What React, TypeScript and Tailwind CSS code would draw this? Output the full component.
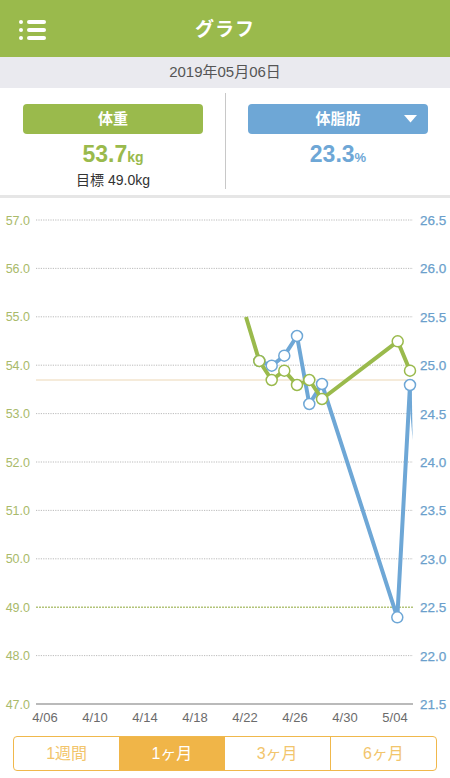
const font = "font-['Liberation_Sans','Noto_Sans_CJK_JP',sans-serif]";

const leftTicks = ["57.0", "56.0", "55.0", "54.0", "53.0", "52.0", "51.0", "50.0", "49.0", "48.0", "47.0"];
const rightTicks = ["26.5", "26.0", "25.5", "25.0", "24.5", "24.0", "23.5", "23.0", "22.5", "22.0", "21.5"];
const days = ["4/06", "4/10", "4/14", "4/18", "4/22", "4/26", "4/30", "5/04"];

const rowY = (i: number) => 220 + i * 48.4;

const weight: [number, number][] = [
  [259.3, 361],
  [271.7, 380],
  [284.3, 370.7],
  [297, 385],
  [309.3, 380],
  [322, 399],
  [397.7, 341.3],
  [410, 370.7],
];

const fat: [number, number][] = [
  [259.3, 361],
  [271.7, 365.7],
  [284.3, 355.7],
  [297, 336],
  [309.3, 404],
  [322, 384],
  [397.3, 617.3],
  [410, 385],
];

const pts = (list: [number, number][]) => list.map(([x, y]) => `${x},${y}`).join(" ");

function Chart() {
  return (
    <svg viewBox="0 198 450 533" width="450" height="533" className="block">
      {leftTicks.map((t, i) =>
        i === 8 || i === 10 ? null : (
          <line key={t} x1="36" x2="413" y1={rowY(i)} y2={rowY(i)} stroke="#a9a9a9" strokeWidth="0.8" strokeDasharray="1.2 1.2" />
        )
      )}
      <line x1="36" x2="413" y1={rowY(8)} y2={rowY(8)} stroke="#b3c47a" strokeWidth="1.6" strokeDasharray="2 1" />
      <line x1="36" x2="413" y1={rowY(10)} y2={rowY(10)} stroke="#a3a3a3" strokeWidth="1.5" />
      <line x1="36" x2="413" y1="380" y2="380" stroke="#ecd7b5" strokeWidth="1" />

      {leftTicks.map((t, i) => (
        <text key={t} x="30" y={rowY(i) + 4.5} textAnchor="end" fontSize="12.5" fill="#a9ba6a" fontFamily="Liberation Sans, sans-serif">
          {t}
        </text>
      ))}
      {rightTicks.map((t, i) => (
        <text key={t} x="420" y={rowY(i) + 5} fontSize="13.5" fill="#6b9fcc" fontFamily="Liberation Sans, sans-serif" stroke="#6b9fcc" strokeWidth="0.25">
          {t}
        </text>
      ))}
      {days.map((d, i) => (
        <text key={d} x={45 + i * 50} y="722" textAnchor="middle" fontSize="13" fill="#6b6b6b" fontFamily="Liberation Sans, sans-serif">
          {d}
        </text>
      ))}

      <polyline points={pts(fat)} fill="none" stroke="#6ea7d6" strokeWidth="4" strokeLinejoin="round" />
      <polygon points="408.3,385 411.7,385 412.6,440" fill="#6ea7d6" />
      <polyline points={`246,317 ${pts(weight)}`} fill="none" stroke="#9aba4c" strokeWidth="4" strokeLinejoin="round" />

      {fat.map(([x, y], i) => (
        <circle key={i} cx={x} cy={y} r="5.5" fill="#fff" stroke="#6ea7d6" strokeWidth="1.5" />
      ))}
      {weight.map(([x, y], i) => (
        <circle key={i} cx={x} cy={y} r="5.5" fill="#fff" stroke="#9aba4c" strokeWidth="1.5" />
      ))}
    </svg>
  );
}

export default function App() {
  return (
    <div className={`w-[450px] h-[778px] bg-white overflow-hidden ${font}`}>
      <div className="h-[57px] bg-[#9aba4c] flex items-center relative">
        <div className="absolute left-[19px] top-[20px] flex flex-col gap-[4.5px]">
          {[0, 1, 2].map((i) => (
            <div key={i} className="flex items-center gap-[4px]">
              <div className="w-[3.5px] h-[3.5px] rounded-full bg-white" />
              <div className="w-[19px] h-[3.5px] rounded-full bg-white" />
            </div>
          ))}
        </div>
        <p className="w-full pt-[3px] text-center text-white text-[19px] font-bold tracking-[1px]">グラフ</p>
      </div>

      <div className="h-[31px] bg-[#eaeaef] flex items-center justify-center text-[15px] text-[#555]">
        2019年05月06日
      </div>

      <div className="h-[107px] flex">
        <div className="w-[225px] pl-[23px] pr-[22px] pt-[16px] flex flex-col items-center">
          <div className="w-full h-[30px] rounded-[4px] bg-[#9aba4c] text-white text-[15px] font-bold flex items-center justify-center">
            体重
          </div>
          <p className="mt-[7px] leading-[26px] font-bold text-[#9aba4c]">
            <span className="text-[23px]">53.7</span>
            <span className="text-[14px]">kg</span>
          </p>
          <p className="text-[14px] text-[#333] leading-[18px] mt-[1px]">目標 49.0kg</p>
        </div>
        <div className="w-px bg-[#c8c8c8] mt-[5px] mb-[6px]" />
        <div className="flex-1 pl-[22px] pr-[22px] pt-[16px] flex flex-col items-center">
          <div className="w-full h-[30px] rounded-[4px] bg-[#6ea7d6] text-white text-[15px] font-bold flex items-center justify-center relative">
            体脂肪
            <svg className="absolute right-[11px] top-[11px]" width="13" height="8" viewBox="0 0 13 8">
              <polygon points="0,0 13,0 6.5,7.5" fill="#fff" />
            </svg>
          </div>
          <p className="mt-[7px] leading-[26px] font-bold text-[#6ea7d6]">
            <span className="text-[23px]">23.3</span>
            <span className="text-[13px]">%</span>
          </p>
        </div>
      </div>

      <div className="h-[3px] bg-[#e6e6e6]" />

      <Chart />

      <div className="mx-[13px] mt-[5px] h-[35px] flex border border-[#f0b84c] rounded-[4px] overflow-hidden text-[16px]">
        <div className="flex-1 flex items-center justify-center text-[#f2c56c]">1週間</div>
        <div className="flex-1 flex items-center justify-center bg-[#f0b548] text-white">1ヶ月</div>
        <div className="flex-1 flex items-center justify-center text-[#f2c56c] border-r border-[#f0b84c]">3ヶ月</div>
        <div className="flex-1 flex items-center justify-center text-[#f2c56c]">6ヶ月</div>
      </div>
    </div>
  );
}
